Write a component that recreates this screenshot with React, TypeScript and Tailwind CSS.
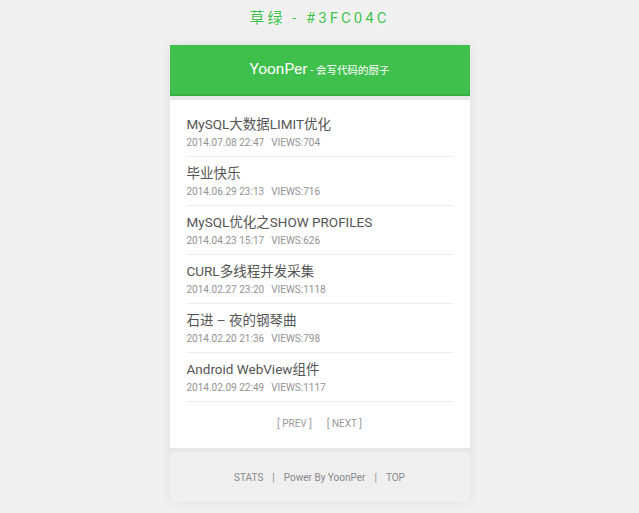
import React from "react";

const posts = [
  { t: "MySQL大数据LIMIT优化", d: "2014.07.08 22:47", v: "704" },
  { t: "毕业快乐", d: "2014.06.29 23:13", v: "716" },
  { t: "MySQL优化之SHOW PROFILES", d: "2014.04.23 15:17", v: "626" },
  { t: "CURL多线程并发采集", d: "2014.02.27 23:20", v: "1118" },
  { t: "石进 – 夜的钢琴曲", d: "2014.02.20 21:36", v: "798" },
  { t: "Android WebView组件", d: "2014.02.09 22:49", v: "1117" },
];

export default function App() {
  return (
    <div
      className="min-h-[513px] w-full bg-[#f0f0f0] flex flex-col items-center"
      style={{ fontFamily: 'Roboto, "Noto Sans CJK SC", sans-serif' }}
    >
      <div className="h-[45px] flex items-center justify-center pb-[9px] text-[15px] tracking-[3px] text-[#3fc04c] [text-shadow:0_0_3px_#fff,0_0_2px_#fff]">
        草绿 - #3FC04C
      </div>
      <div className="w-[300px] bg-[#e8e8e8] shadow-[0_0_10px_rgba(0,0,0,0.08)] flex flex-col">
        <div className="h-[51px] bg-[#3fc04c] border-b-2 border-[#38ad44] flex items-center justify-center text-white pt-[1px]">
          <span className="text-[15.5px]">YoonPer</span>
          <span className="text-[10.5px] ml-[3px] mt-[2px]">- 会写代码的厨子</span>
        </div>
        <div className="mt-[4px] bg-white px-[17px] pt-[8px] pb-[16px]">
          {posts.map((p) => (
            <div key={p.d} className="border-b border-[#eeeeee] pt-[6px] pb-[6px]">
              <div className="text-[13.5px] leading-[20px] text-[#555]">{p.t}</div>
              <div className="text-[10px] leading-[16px] text-[#929292] mt-[1px] -mb-[1px]">
                {p.d}
                <span className="ml-[7px]">VIEWS:{p.v}</span>
              </div>
            </div>
          ))}
          <div className="flex justify-center gap-[15px] mt-[14px] text-[10px] leading-[16px] text-[#999]">
            <span>[ PREV ]</span>
            <span>[ NEXT ]</span>
          </div>
        </div>
        <div className="mt-[4px] h-[50px] bg-[#efefef] flex items-center justify-center text-[10px] text-[#888] gap-[9px]">
          <span>STATS</span>
          <span>|</span>
          <span>Power By YoonPer</span>
          <span>|</span>
          <span>TOP</span>
        </div>
      </div>
    </div>
  );
}
